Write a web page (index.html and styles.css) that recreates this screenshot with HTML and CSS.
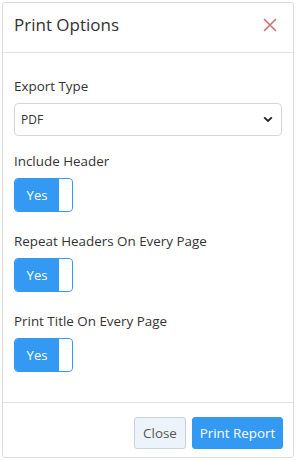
FILE: index.html
```html
<!DOCTYPE html>
<html lang="en">
<head>
    <meta charset="UTF-8">
    <title>Print Options</title>
    <link rel="stylesheet" href="styles.css">
</head>
<body>
    <div class="modal">
        <!-- Header -->
        <div class="modal-header">
            <span class="modal-title">Print Options</span>
            <span class="close-x">
                <svg width="14" height="14" viewBox="0 0 14 14">
                    <path d="M1 1 L13 13 M13 1 L1 13" stroke="#d0706a" stroke-width="1.6" fill="none"/>
                </svg>
            </span>
        </div>

        <!-- Body -->
        <div class="modal-body">
            <div class="group">
                <label class="field-label">Export Type</label>
                <div class="select-box">
                    <span>PDF</span>
                    <svg width="10" height="7" viewBox="0 0 10 7">
                        <path d="M1.2 1.3 L5 5 L8.8 1.3" stroke="#222" stroke-width="1.8" fill="none"/>
                    </svg>
                </div>
            </div>
            <div class="group">
                <label class="field-label">Include Header</label>
                <div class="toggle"><span class="toggle-on">Yes</span><span class="toggle-knob"></span></div>
            </div>
            <div class="group">
                <label class="field-label">Repeat Headers On Every Page</label>
                <div class="toggle"><span class="toggle-on">Yes</span><span class="toggle-knob"></span></div>
            </div>
            <div class="group">
                <label class="field-label">Print Title On Every Page</label>
                <div class="toggle"><span class="toggle-on">Yes</span><span class="toggle-knob"></span></div>
            </div>
        </div>

        <!-- Footer -->
        <div class="modal-footer">
            <button class="btn btn-close">Close</button>
            <button class="btn btn-print">Print Report</button>
        </div>
    </div>
</body>
</html>
```

FILE: styles.css
```css
body {
    margin: 0;
    background: #fff;
    font-family: 'Open Sans', sans-serif;
    color: #333;
}

.modal {
    margin: 2px 2px 0 2px;
    width: 292px;
    height: 456px;
    border: 1px solid #dcdcdc;
    border-radius: 3px;
    display: flex;
    flex-direction: column;
    box-sizing: border-box;
}

.modal-header {
    height: 49px;
    border-bottom: 1px solid #e3e3e3;
    display: flex;
    align-items: center;
    justify-content: space-between;
    padding: 0 16px 0 11px;
}

.modal-title {
    font-size: 17px;
    color: #333;
    margin-top: -6px;
}

.close-x {
    display: flex;
    margin-top: -5px;
}

.modal-body {
    flex: 1;
    padding: 24px 11px 0 11px;
}

.group {
    margin-bottom: 20px;
}

.group:first-child {
    margin-bottom: 16px;
}

.field-label {
    display: block;
    font-size: 13.4px;
    line-height: 18px;
    margin-bottom: 8px;
    color: #333;
}

.select-box {
    height: 33px;
    border: 1px solid #d6d6d6;
    border-radius: 4px;
    box-sizing: border-box;
    display: flex;
    align-items: center;
    justify-content: space-between;
    padding: 0 8px 0 6px;
    font-size: 12px;
    color: #333;
}

.toggle {
    width: 59px;
    height: 34px;
    display: flex;
    border: 1px solid #3399f3;
    border-radius: 4px;
    box-sizing: border-box;
    overflow: hidden;
}

.toggle-on {
    width: 44px;
    background: #3399f3;
    color: #fff;
    font-size: 13px;
    display: flex;
    align-items: center;
    justify-content: center;
}

.toggle-knob {
    flex: 1;
    background: #fff;
    border-radius: 4px;
}

.modal-footer {
    border-top: 1px solid #e3e3e3;
    height: 55px;
    display: flex;
    justify-content: flex-end;
    align-items: flex-start;
    gap: 6px;
    padding: 14px 10px 0 0;
    box-sizing: border-box;
}

.btn {
    height: 32px;
    font-family: 'Open Sans', sans-serif;
    font-size: 13.4px;
    border-radius: 3px;
    cursor: pointer;
}

.btn-close {
    width: 52px;
    background: #edf3fa;
    border: 1px solid #c9d1da;
    color: #555;
}

.btn-print {
    width: 91px;
    background: #3399f3;
    border: 1px solid #3399f3;
    color: #fff;
}
```
